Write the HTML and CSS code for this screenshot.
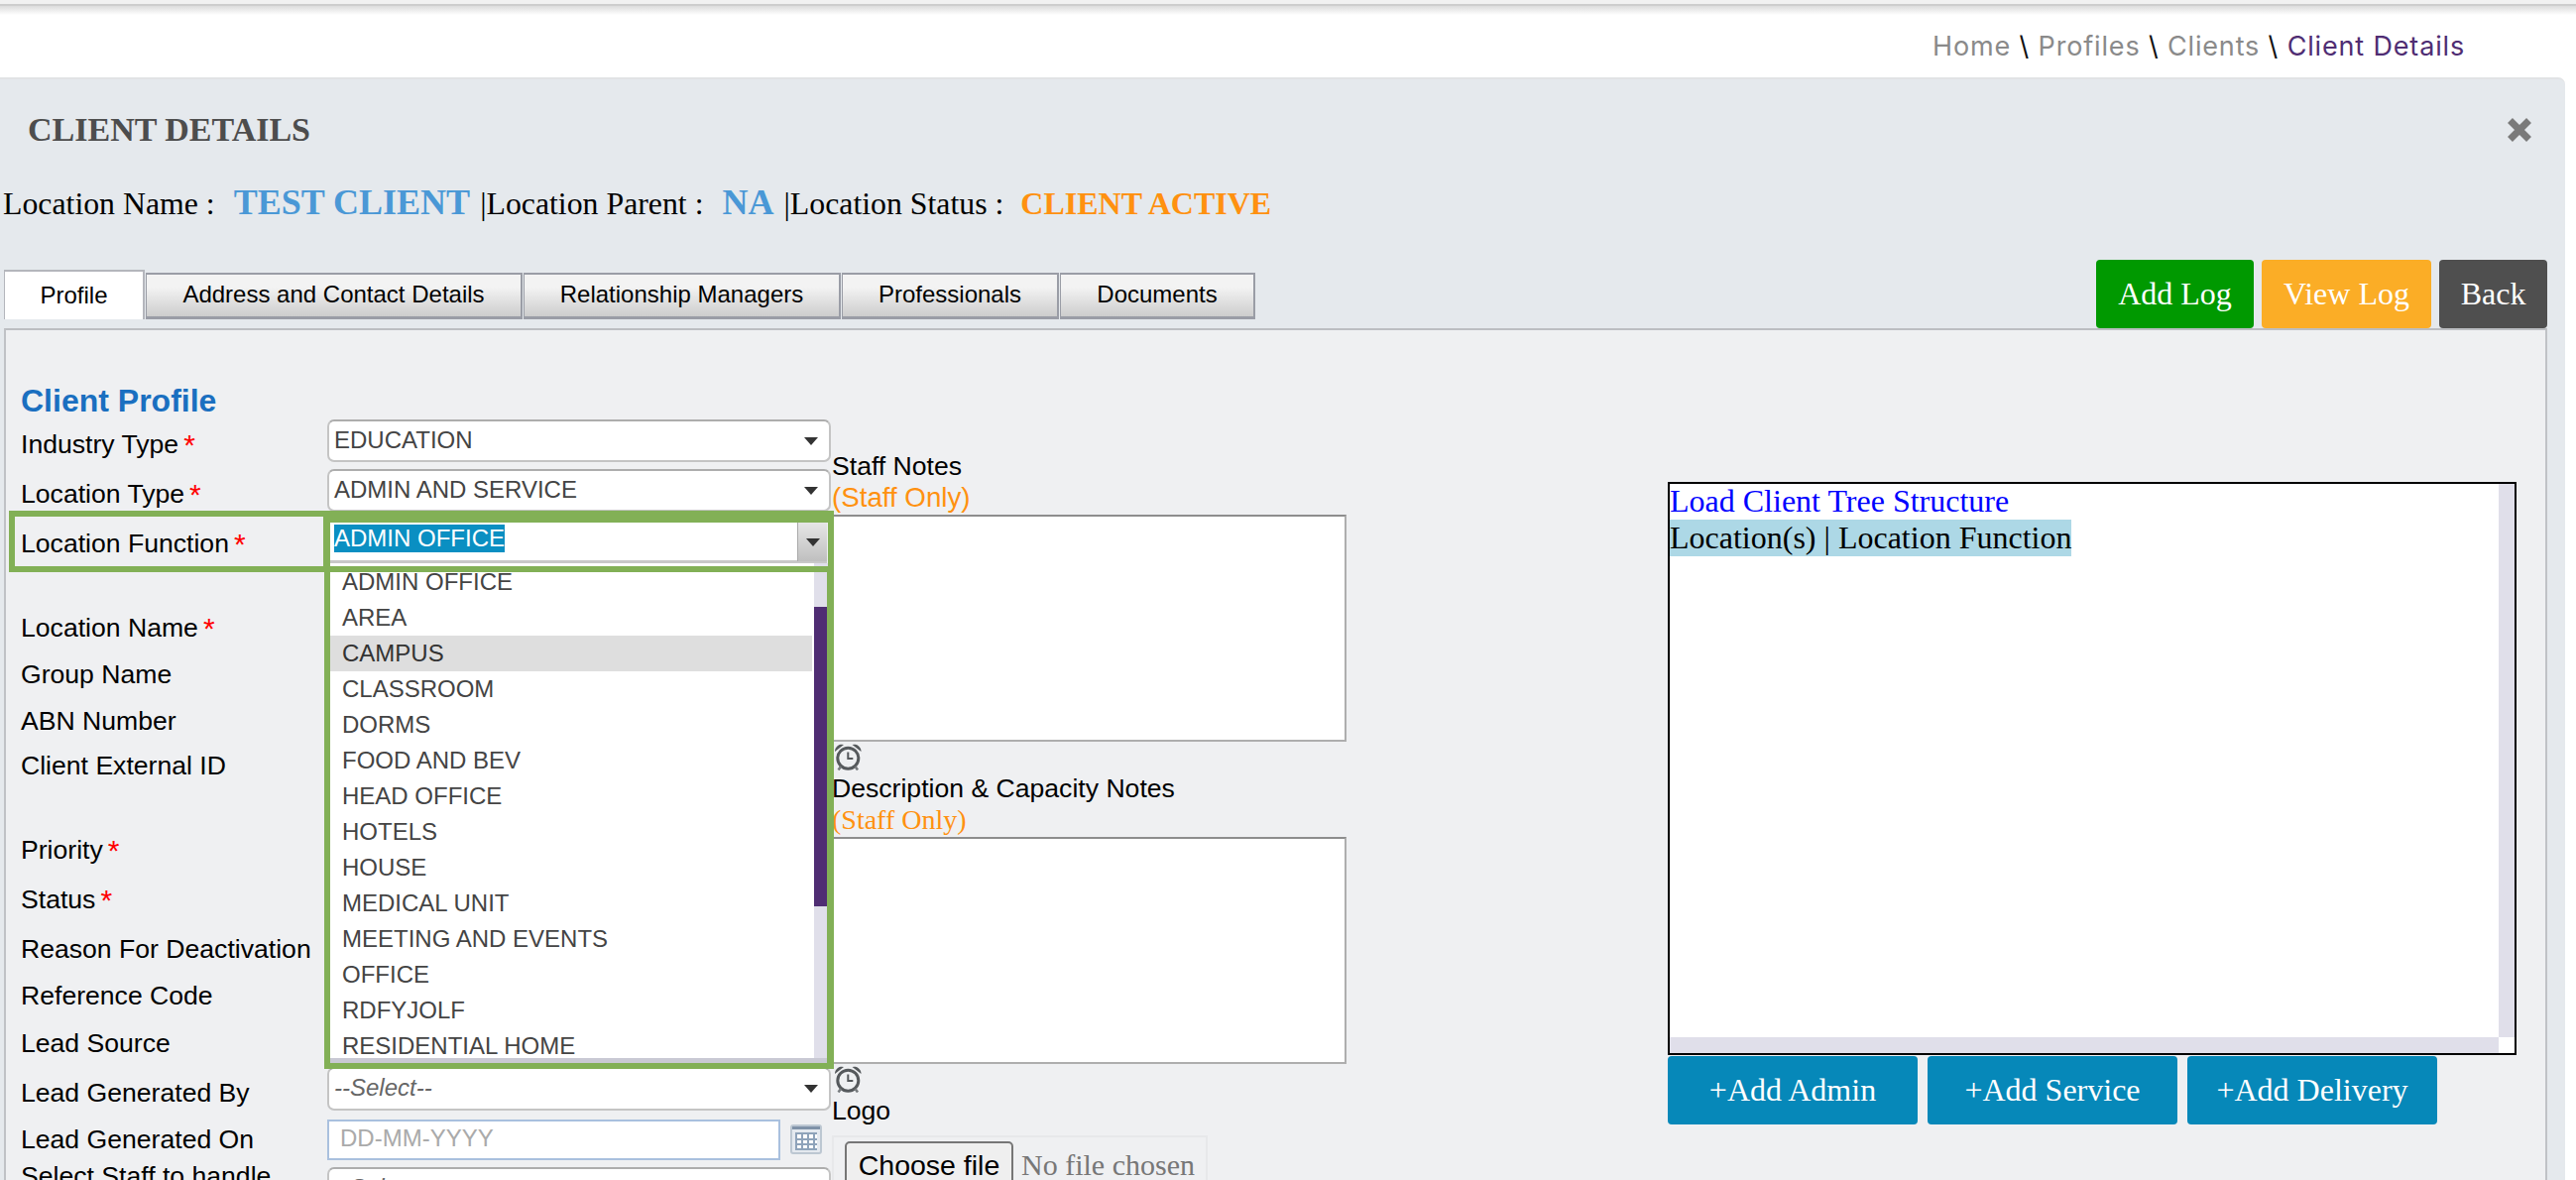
FILE: index.html
```html
<!DOCTYPE html>
<html lang="en">
<head>
<meta charset="utf-8">
<title>Client Details</title>
<link rel="stylesheet" href="styles.css">
</head>
<body>
<div class="browser-bar"></div>
<header class="topbar">
  <nav class="crumbs"><span class="crumb">Home</span> <span class="sep">\</span> <span class="crumb">Profiles</span> <span class="sep">\</span> <span class="crumb">Clients</span> <span class="sep">\</span> <span class="crumb-current">Client Details</span></nav>
</header>
<main class="panel">
  <div class="title-row">
    <h1 class="title">CLIENT DETAILS</h1>
    <svg class="close" viewBox="0 0 24 24" width="24" height="24"><path d="M2.500 2.500 L21.500 21.500 M21.500 2.500 L2.500 21.500" stroke="#7a7a7a" stroke-width="7" fill="none"/></svg>
  </div>
  <div class="loc-row">
    <span>Location Name :</span><span class="val blue">TEST CLIENT</span><span>|Location Parent :</span><span class="val blue">NA</span><span>|Location Status :</span><span class="val orange">CLIENT ACTIVE</span>
  </div>
  <div class="tab-row">
    <div class="tabs">
      <div class="tab tab-active">Profile</div>
      <div class="tab tab-address">Address and Contact Details</div>
      <div class="tab tab-rel">Relationship Managers</div>
      <div class="tab tab-prof">Professionals</div>
      <div class="tab tab-docs">Documents</div>
    </div>
    <div class="actions">
      <button class="btn btn-green">Add Log</button>
      <button class="btn btn-amber">View Log</button>
      <button class="btn btn-dark">Back</button>
    </div>
  </div>
  <section class="profile">
    <div class="columns">
      <div class="form-col">
        <h2 class="section-title">Client Profile</h2>
        <div class="row"><label class="lbl">Industry Type<i class="req">*</i></label><div class="select"><span>EDUCATION</span><b class="arrow"></b></div></div>
        <div class="row m6"><label class="lbl">Location Type<i class="req">*</i></label><div class="select"><span>ADMIN AND SERVICE</span><b class="arrow"></b></div></div>
        <div class="row m6"><label class="lbl">Location Function<i class="req">*</i></label></div>
        <div class="row m41"><label class="lbl">Location Name<i class="req">*</i></label></div>
        <div class="row m3"><label class="lbl">Group Name</label></div>
        <div class="row m3"><label class="lbl">ABN Number</label></div>
        <div class="row m1"><label class="lbl">Client External ID</label></div>
        <div class="row m41"><label class="lbl">Priority<i class="req">*</i></label></div>
        <div class="row m6"><label class="lbl">Status<i class="req">*</i></label></div>
        <div class="row m6"><label class="lbl">Reason For Deactivation</label></div>
        <div class="row m3"><label class="lbl">Reference Code</label></div>
        <div class="row m4"><label class="lbl">Lead Source</label></div>
        <div class="row m6"><label class="lbl">Lead Generated By</label><div class="select select-low"><em>--Select--</em><b class="arrow"></b></div></div>
        <div class="row m3"><label class="lbl">Lead Generated On</label><div class="date-wrap"><div class="date">DD-MM-YYYY</div>
          <svg class="cal" viewBox="0 0 32 30" width="32" height="30"><rect x="1" y="1" width="30" height="28" rx="2" fill="#e4e9ef" stroke="#bcc7d2" stroke-width="2"/><rect x="2" y="2" width="28" height="3" fill="#7f92a8"/><rect x="5" y="8" width="22" height="18" fill="#fff"/><path d="M5 9h22M5 15h22M5 20h22M5 25h22M6 8v18M12 8v18M18 8v18M24 8v18" stroke="#8ea3ba" stroke-width="2" fill="none"/></svg>
        </div></div>
        <div class="row row-last"><label class="lbl">Select Staff to handle</label><div class="select select-last"><em>--Select--</em></div></div>
      </div>
      <div class="notes-col">
        <div class="note-label">Staff Notes</div>
        <div class="staff-only staff-sans">(Staff Only)</div>
        <div class="textarea ta-first"></div>
        <svg class="clock" viewBox="0 0 28 28" width="28" height="28"><use href="#alarm"/></svg>
        <div class="note-label">Description &amp; Capacity Notes</div>
        <div class="staff-only">(Staff Only)</div>
        <div class="textarea ta-second"></div>
        <svg class="clock" viewBox="0 0 28 28" width="28" height="28"><use href="#alarm"/></svg>
        <div class="note-label logo-label">Logo</div>
        <div class="filebox"><span class="file-btn">Choose file</span><span class="file-none">No file chosen</span></div>
      </div>
      <div class="tree-col">
        <div class="tree">
          <div class="tree-link">Load Client Tree Structure</div>
          <div><span class="tree-head">Location(s) | Location Function</span></div>
          <div class="tree-vbar"></div>
          <div class="tree-hbar"></div>
        </div>
        <div class="tree-btns">
          <button class="btn-add">+Add Admin</button>
          <button class="btn-add">+Add Service</button>
          <button class="btn-add">+Add Delivery</button>
        </div>
      </div>
    </div>

    <div class="focus-select">
      <span class="sel-text">ADMIN OFFICE</span>
      <div class="focus-btn"><b class="arrow"></b></div>
    </div>
    <div class="dropdown">
      <ul class="options">
        <li>ADMIN OFFICE</li>
        <li>AREA</li>
        <li class="hover">CAMPUS</li>
        <li>CLASSROOM</li>
        <li>DORMS</li>
        <li>FOOD AND BEV</li>
        <li>HEAD OFFICE</li>
        <li>HOTELS</li>
        <li>HOUSE</li>
        <li>MEDICAL UNIT</li>
        <li>MEETING AND EVENTS</li>
        <li>OFFICE</li>
        <li>RDFYJOLF</li>
        <li>RESIDENTIAL HOME</li>
      </ul>
      <div class="scroll-track"><div class="scroll-thumb"></div></div>
      <div class="scroll-bottom"></div>
    </div>
    <div class="mark mark-label"></div>
    <div class="mark mark-input"></div>
    <div class="mark mark-list"></div>
  </section>
</main>
<svg class="defs" width="0" height="0">
  <symbol id="alarm" viewBox="0 0 28 28">
    <circle cx="14.300" cy="15.700" r="10.500" fill="#eef0f2" stroke="#55595c" stroke-width="3"/>
    <path d="M14.300 9.500v6.500h5" stroke="#55595c" stroke-width="2" fill="none"/>
    <path d="M1 9 a7 7 0 0 1 9-7z M27.500 9 a7 7 0 0 0-9-7z" fill="#55595c"/>
    <path d="M7 24l-2.500 3.500M21.500 24l2.500 3.500" stroke="#777b7e" stroke-width="2.500"/>
  </symbol>
</svg>
</body>
</html>
```
FILE: styles.css
```css
* { box-sizing: border-box; }
html, body { margin: 0; padding: 0; height: 1190px; overflow: hidden; background: #fff; }
body { font-family: "Liberation Sans", Arial, sans-serif; color: #000; }

.defs { position: absolute; }

.browser-bar { height: 6px; background: #f1f1f1; border-bottom: 2px solid #cdcdcd; }
.topbar {
  height: 72px;
  display: flex;
  justify-content: flex-end;
  background: linear-gradient(#dcdcdc 0, #fff 9px);
  padding: 21px 112px 0 0;
}
.crumbs { font-family: Inter, "Open Sans", sans-serif; font-size: 27px; line-height: 40px; white-space: pre; letter-spacing: 0.84px; }
.crumb { color: #8a8a8a; }
.sep { color: #111; }
.crumb-current { color: #4f2d73; }

.panel {
  margin-right: 11px;
  height: 1112px;
  background: #e5e9ed;
  border-top: 2px solid #e1e3e5;
  border-radius: 0 7px 0 0;
  padding-top: 31px;
}
.title-row { display: flex; justify-content: space-between; align-items: center; height: 40px; padding: 0 34px 0 28px; }
.title { margin: 0; font: bold 34px/40px "Liberation Serif", serif; color: #4d4d4d; }
.close { display: block; }

.loc-row {
  margin-top: 33px;
  height: 41px;
  padding-left: 3px;
  display: flex;
  align-items: baseline;
  font: 31.800px/40px "Liberation Serif", serif;
  white-space: nowrap;
}
.val { font-weight: bold; margin: 0 10px 0 19px; }
.blue { color: #4a98d6; font-size: 36px; }
.orange { color: #ff9110; font-size: 32px; margin-left: 17px; }

.tab-row {
  margin-top: 37px;
  height: 69px;
  display: flex;
  justify-content: space-between;
  align-items: flex-end;
  padding: 0 18px 0 4px;
}
.tabs { display: flex; align-items: flex-end; padding-bottom: 9px; }
.tab {
  height: 47px;
  border: 2px solid #9a9da6;
  border-bottom-width: 3px;
  border-left-width: 1px;
  background: linear-gradient(#f3f3f3 30%, #cdcdcd);
  font-size: 24px;
  line-height: 40px;
  text-align: center;
  color: #000;
  margin-right: 1px;
}
.tab-active {
  width: 142px;
  height: 50px;
  background: #fff;
  border-color: #b4b6bc;
  border-bottom: 0;
  line-height: 48px;
}
.tab-address { width: 380px; }
.tab-rel { width: 320px; }
.tab-prof { width: 219px; }
.tab-docs { width: 197px; margin-right: 0; }

.actions { display: flex; gap: 8px; }
.btn {
  height: 69px;
  border: 0;
  border-radius: 4px;
  color: #fff;
  font: 32px "Liberation Serif", serif;
  padding: 0;
}
.btn-green { width: 159px; background: #009900; }
.btn-amber { width: 171px; background: #fbad26; }
.btn-dark { width: 109px; background: #4f4f4f; }

.profile {
  position: relative;
  margin: 0 18px 0 4px;
  height: 900px;
  background: #eff0f2;
  border-top: 2px solid #bcbec2;
  border-left: 2px solid #c0c2c6;
  border-right: 2px solid #c0c2c6;
}
.columns { display: flex; align-items: flex-start; }

.form-col { width: 833px; padding-left: 15px; }
.section-title {
  margin: 51px 0 0;
  height: 42px;
  font: bold 32px/40px "Liberation Sans", sans-serif;
  color: #1a6fc0;
}
.row { display: flex; height: 44px; margin-bottom: 0; align-items: center; }
.m1 { margin-top: 1px; }
.m3 { margin-top: 3px; }
.m4 { margin-top: 4px; }
.m6 { margin-top: 6px; }
.m41 { margin-top: 41px; }
.lbl { width: 309px; flex: none; font-size: 26.600px; line-height: 44px; white-space: nowrap; }
.req { font-style: normal; font-size: 30px; line-height: 0; color: #f00; margin-left: 5px; vertical-align: -2px; }

.select {
  align-self: flex-start;
  margin-top: -3px;
  width: 508px;
  height: 43px;
  flex: none;
  background: #fff;
  border: 2px solid #c4c4c4;
  border-top-color: #adadad;
  border-radius: 7px;
  padding: 0 5px 2px;
  display: flex;
  align-items: center;
  justify-content: space-between;
  font-size: 24px;
  color: #444;
}
.select .arrow { margin-top: 2px; }
.select-low { margin-top: -4px; height: 44px; }
.select em { color: #666; }
.arrow { display: block; width: 0; height: 0; margin-right: 6px; border: 7.500px solid transparent; border-top: 8px solid #333; border-bottom: 0; }

.date-wrap { display: flex; align-items: center; gap: 10px; }
.date {
  width: 457px;
  height: 41px;
  border: 2px solid #a9c0de;
  background: #fff;
  padding-left: 11px;
  font-size: 24px;
  line-height: 34px;
  color: #aaa;
}
.cal { display: block; margin: 0; }
.row-last { margin-top: 0; height: 40px; align-items: flex-start; }
.select-last { margin-top: 6px; }
.row-last .lbl { line-height: 30px; }

.notes-col { width: 519px; padding-top: 121px; font-size: 26.600px; }
.note-label { line-height: 32px; height: 32px; }
.staff-only { font: 28px/30px "Liberation Serif", serif; color: #ff9110; height: 30px; padding-top: 1px; }
.staff-sans { font-family: "Liberation Sans", sans-serif; font-size: 27.700px; }
.textarea { background: #fff; border: 2px solid #aeaeae; border-top-color: #8d8d8d; }
.ta-first { margin-top: 3px; height: 229px; }
.ta-second { margin-top: 3px; height: 229px; }
.clock { display: block; margin: 1px 0 2px 2px; }
.logo-label { margin-top: 1px; }
.filebox {
  margin-top: 9px;
  width: 379px;
  height: 60px;
  border: 2px solid #e7e8ea;
  padding: 4px 0 0 11px;
  display: flex;
  align-items: flex-start;
}
.file-btn {
  width: 170px;
  height: 50px;
  background: #efefef;
  border: 2px solid #767676;
  border-radius: 5px;
  font-size: 28.500px;
  line-height: 44px;
  text-align: center;
}
.file-none { font: 30px/44px "Liberation Serif", serif; color: #777; margin: 2px 0 0 8px; }

.tree-col { margin-left: 324px; padding-top: 153px; }
.tree {
  position: relative;
  width: 856px;
  height: 578px;
  border: 2px solid #000;
  background: #fff;
  font: 32px/37px "Liberation Serif", serif;
}
.tree-link { color: #00f; margin-top: -1px; }
.tree-head { display: inline-block; background: #add8e6; }
.tree-vbar { position: absolute; top: 0; right: 0; width: 16px; height: 558px; background: #e0dfea; }
.tree-hbar { position: absolute; left: 0; bottom: 0; width: 836px; height: 16px; background: #e0dfea; }
.tree-btns { display: flex; gap: 10px; margin-top: 1px; }
.btn-add {
  width: 252px;
  height: 69px;
  border: 0;
  border-radius: 4px;
  background: #0688b9;
  color: #fff;
  font: 32px "Liberation Serif", serif;
  padding: 0;
}

.focus-select {
  position: absolute;
  left: 327px;
  top: 194px;
  width: 501px;
  height: 41px;
  background: #fff;
  border-bottom: 3px solid #c8c8c8;
  padding-left: 4px;
  font-size: 24px;
}
.sel-text { display: inline-block; margin-top: 2px; background: #0a8fc2; color: #fff; line-height: 28px; height: 28px; width: 172px; }
.focus-btn {
  position: absolute;
  right: 0;
  top: 0;
  width: 30px;
  height: 39px;
  background: linear-gradient(#e6e6e6, #bfbfbf);
  border-left: 1px solid #aaa;
  display: flex;
  align-items: center;
  justify-content: center;
}
.focus-btn .arrow { margin: 0; }

.dropdown {
  position: absolute;
  left: 327px;
  top: 235px;
  width: 504px;
  height: 504px;
  background: #fff;
  overflow: hidden;
}
.options { list-style: none; margin: 1px 0 0; padding: 0; width: 486px; }
.options li { height: 36px; line-height: 36px; padding-left: 12px; font-size: 24px; color: #444; white-space: nowrap; }
.options li.hover { background: #dedede; color: #333; }
.scroll-track { position: absolute; top: 0; right: 0; width: 16px; height: 499px; background: #e0dfea; }
.scroll-thumb { position: absolute; top: 44px; left: 0; width: 100%; height: 302px; background: #4f2d73; }
.scroll-bottom { position: absolute; left: 0; bottom: 0; width: 100%; height: 5px; background: #c9c9d4; }

.mark { position: absolute; border: 6px solid #82b056; pointer-events: none; }
.mark-label { left: 3px; top: 182px; width: 323px; height: 62px; border-top-width: 6px; }
.mark-input { left: 321px; top: 182px; width: 514px; height: 62px; border-top-width: 12px; }
.mark-list { left: 321px; top: 238px; width: 514px; height: 507px; border-right-width: 7px; }
```
